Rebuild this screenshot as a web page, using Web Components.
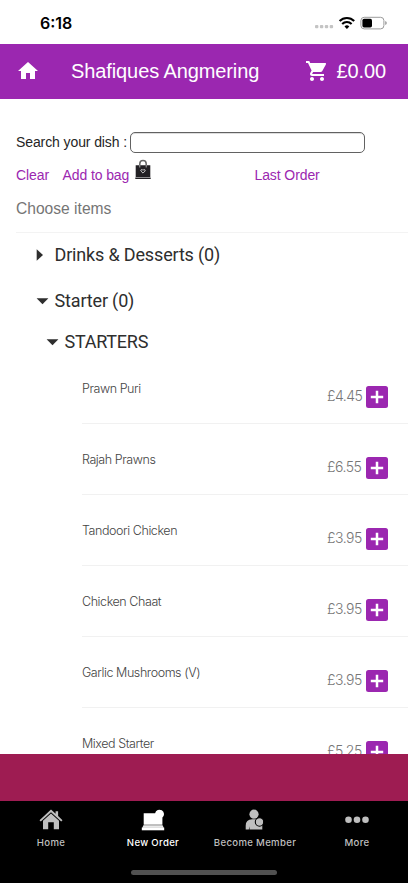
<!DOCTYPE html>
<html lang="en">
<head>
<meta charset="utf-8">
<title>Shafiques Angmering</title>
<style>
html,body{margin:0;height:100%;overflow:hidden;background:#fff}
</style>
</head>
<body>
<order-app></order-app>
<script>
const define = (name, html, setup) => customElements.define(name, class extends HTMLElement {
  constructor() {
    super();
    const t = document.createElement('template');
    t.innerHTML = html;
    this.attachShadow({mode: 'open'}).append(t.content.cloneNode(true));
  }
  connectedCallback() { if (setup) setup(this, this.shadowRoot); }
});

define('status-bar', `
<style>
:host{display:flex;height:44px;flex:none;box-sizing:border-box;padding:0 21px 0 40px;align-items:center;justify-content:space-between;background:#fff;color:#000}
.time{font:600 16px/20px Inter,sans-serif;letter-spacing:0;margin-top:1px}
svg{display:block;margin-top:1px}
</style>
<span class="time">6:18</span>
<svg width="72" height="14" viewBox="0 0 72 14">
  <g fill="#c4c4c4"><rect x="0" y="9" width="3.4" height="3.2" rx="1"/><rect x="4.9" y="9" width="3.4" height="3.2" rx="1"/><rect x="9.8" y="9" width="3.4" height="3.2" rx="1"/><rect x="14.7" y="9" width="3.4" height="3.2" rx="1"/></g>
  <g fill="none" stroke="#000" stroke-width="2.1"><path d="M24.6 5.1a10.3 10.3 0 0 1 14.6 0"/><path d="M27.2 8a6.6 6.6 0 0 1 9.4 0"/></g>
  <path d="M31.9 12.9l-2.4-2.5a3.4 3.4 0 0 1 4.8 0z"/>
  <rect x="45.9" y="1.3" width="23" height="11.6" rx="3.3" fill="none" stroke="#9b9b9b"/>
  <rect x="47.4" y="2.8" width="9.6" height="8.6" rx="1.7"/>
  <path d="M70.2 5.1q1.6.6 1.6 2t-1.6 2z" fill="#9b9b9b"/>
</svg>`);

define('app-header', `
<style>
:host{display:flex;height:55px;flex:none;box-sizing:border-box;padding:0 22px 1px 16px;align-items:center;background:#9b27b0;color:#fff;font:20px/24px "Liberation Sans",Arial,sans-serif}
svg{fill:#fff;display:block;flex:none}
.title{margin-left:31px;flex:1;letter-spacing:-.1px}
.cart{margin-right:7px}
::slotted(span){letter-spacing:-.1px}
</style>
<svg width="24" height="24" viewBox="0 0 24 24"><path d="M10 20v-6h4v6h5v-8h3L12 3 2 12h3v8z"/></svg>
<span class="title"><slot></slot></span>
<svg class="cart" width="24" height="24" viewBox="0 0 24 24"><path d="M7 18c-1.1 0-1.99.9-1.99 2S5.9 22 7 22s2-.9 2-2-.9-2-2-2zM1 2v2h2l3.6 7.59-1.35 2.45c-.16.28-.25.61-.25.96 0 1.1.9 2 2 2h12v-2H7.42c-.14 0-.25-.11-.25-.25l.03-.12.9-1.63h7.45c.75 0 1.41-.41 1.75-1.03l3.58-6.49A1 1 0 0 0 20 4H5.21l-.94-2H1zm16 16c-1.1 0-1.99.9-1.99 2s.89 2 1.99 2 2-.9 2-2-.9-2-2-2z"/></svg>
<slot name="total"></slot>`);

define('search-panel', `
<style>
:host{display:block;box-sizing:border-box;height:134px;padding:33px 0 0 16px;font:14px/20px "Liberation Sans",Arial,sans-serif;color:#252525}
.row{display:flex;align-items:center;height:21px}
.label{width:111px;letter-spacing:-.1px;white-space:nowrap;margin-top:-2px}
.field{width:234.5px;height:21px;box-sizing:border-box;border:1px solid #626262;border-radius:5px;margin-left:3.4px;background:#fff;box-shadow:inset 0 1px 0 #ddd}
.links{height:20px;margin-top:12px;color:#9b27b0;letter-spacing:-.1px}
.clear{width:46.5px}
.add{width:67px;white-space:nowrap}
svg{margin:-11px 0 0 5.5px;flex:none}
.last{margin-left:103.5px}
.choose{height:47px;line-height:48px;font-size:15.6px;color:#757575;border-bottom:1px solid #f3f3f3}
</style>
<div class="row"><span class="label">Search your dish :</span><div class="field"></div></div>
<div class="row links"><span class="clear">Clear</span><span class="add">Add to bag</span>
<svg width="16" height="21" viewBox="0 0 16 21"><path d="M4.8 9V4.7a3.2 3.2 0 0 1 6.4 0V9" fill="none" stroke="#666" stroke-width="1.5"/><path d="M.7 6.3h14.6v11.6H.7zM.3 18.5h15.4v1.6H.3z" fill="#222024"/><path d="M4.8 8.5V6m6.4 2.5V6" stroke="#aaa"/><path d="M8 14.1l-2.1-2.1q-.4-1.4.8-1.5.9 0 1.3.8.4-.8 1.3-.8 1.2.1.8 1.5z" fill="none" stroke="#d8d8d8" stroke-width=".9"/></svg>
<span class="last">Last Order</span></div>
<div class="choose">Choose items</div>`);

define('tree-node', `
<style>
:host{display:flex;align-items:center;box-sizing:border-box;height:45px;padding-left:36px;color:#2e2e2e;font:18px/24px Roboto,sans-serif;letter-spacing:-.16px}
:host([closed]){padding-bottom:1px}
:host([sub]){padding-left:46px;height:38px;letter-spacing:-.25px}
.mark{width:18.5px;flex:none;display:flex}
svg{fill:#2e2e2e;display:block}
.closed{display:none}
:host([closed]) .open{display:none}
:host([closed]) .closed{display:block}
</style>
<span class="mark"><svg class="open" width="13" height="8" viewBox="0 0 13 8"><path d="M.6 1.2h11.8L6.5 7.2z"/></svg><svg class="closed" width="9" height="14" viewBox="0 0 9 14"><path d="M.7 1.2v11.6L7 7z"/></svg></span>
<span><slot></slot></span>`);

define('dish-row', `
<style>
:host{display:flex;box-sizing:border-box;height:71px;flex:none;margin-left:82px;padding-right:20px;border-bottom:1px solid #f1f1f1;font:300 12.5px/20px Inter,sans-serif;color:#444}
.name{flex:1;padding-top:26px;letter-spacing:-.43px}
.price{padding-top:33px;font-size:14px;color:#777;letter-spacing:-.5px;width:35px;margin-right:4px}
svg{margin-top:33px;display:block}
</style>
<span class="name"><slot></slot></span><span class="price"></span>
<svg width="22" height="22" viewBox="0 0 22 22"><rect width="22" height="22" rx="2.5" fill="#9b27b0"/><path d="M11 4.8v12.4M4.8 11h12.4" stroke="#fff" stroke-width="2.5"/></svg>`,
(el, root) => { root.querySelector('.price').textContent = el.getAttribute('price'); });

define('tab-item', `
<style>
:host{display:flex;flex-direction:column;align-items:center;flex:1 1 0;min-width:0;padding-top:7px;color:#bfbfbf;font:500 9.6px/12px Inter,sans-serif;letter-spacing:.32px;white-space:nowrap}
:host([active]){color:#fff}
.icon{height:24px;margin-bottom:5px}
::slotted(svg){display:block;fill:currentColor}
</style>
<div class="icon"><slot name="icon"></slot></div><span><slot></slot></span>`);

define('tab-bar', `
<style>
:host{display:flex;flex-direction:column;height:82px;flex:none;background:#000}
.tabs{display:flex;flex:1}
.handle{width:146px;height:5px;border-radius:3px;background:#515151;margin:0 auto 8px}
</style>
<div class="tabs"><slot></slot></div><div class="handle"></div>`);

define('order-app', `
<style>
:host{display:flex;flex-direction:column;height:883px;width:408px;overflow:hidden;background:#fff}
main{flex:1;min-height:0;overflow:hidden}
.banner{height:47px;flex:none;background:#9e1c52}
</style>
<status-bar></status-bar>
<app-header>Shafiques Angmering<span slot="total">£0.00</span></app-header>
<main>
<search-panel></search-panel>
<tree-node closed>Drinks &amp; Desserts (0)</tree-node>
<tree-node>Starter (0)</tree-node>
<tree-node sub>STARTERS</tree-node>
<dish-row style="margin-top:-8px" price="£4.45">Prawn Puri</dish-row>
<dish-row price="£6.55">Rajah Prawns</dish-row>
<dish-row price="£3.95">Tandoori Chicken</dish-row>
<dish-row price="£3.95">Chicken Chaat</dish-row>
<dish-row price="£3.95">Garlic Mushrooms (V)</dish-row>
<dish-row price="£5.25">Mixed Starter</dish-row>
</main>
<div class="banner"></div>
<tab-bar>
<tab-item><svg slot="icon" width="24" height="24" viewBox="0 0 24 24"><path d="M.5 12.2L12 1.6l4.6 4.2V3.2h2.5v4.9l4.4 4.1-1.3 1.3L12 4.2 1.8 13.5z"/><path d="M4 12.7L12 5.4l8 7.3v8.6h-5.2v-7H9.2v7H4z"/></svg>Home</tab-item>
<tab-item active><svg slot="icon" width="24" height="24" viewBox="0 0 24 24"><path d="M2.7 5.2h11.4a4.5 4.5 0 1 1 7.3 4.4v7.2H2.7z"/><path d="M2.4 17.2h19.2l1.2 3.1H1.2z"/><path d="M.8 19.6h22.4v2.7H.8z"/><path d="M1.6 19.1h20.8" stroke="#999" stroke-width=".5"/></svg>New Order</tab-item>
<tab-item><svg slot="icon" width="24" height="24" viewBox="0 0 24 24"><circle cx="11" cy="6.2" r="4.6"/><path d="M2.7 21.4v-3.7q0-6.5 6.5-6.5h3.6q6.5 0 6.5 6.5v3.7H6.5v-3.1l-.7 3.1z"/><circle cx="16.5" cy="14" r="4.2" stroke="#000" stroke-width="1.1"/></svg>Become Member</tab-item>
<tab-item><svg slot="icon" width="26" height="24" viewBox="0 0 26 24"><circle cx="4.5" cy="11.8" r="3.3"/><circle cx="13" cy="11.8" r="3.3"/><circle cx="21.5" cy="11.8" r="3.3"/></svg>More</tab-item>
</tab-bar>`);
</script>
</body>
</html>
